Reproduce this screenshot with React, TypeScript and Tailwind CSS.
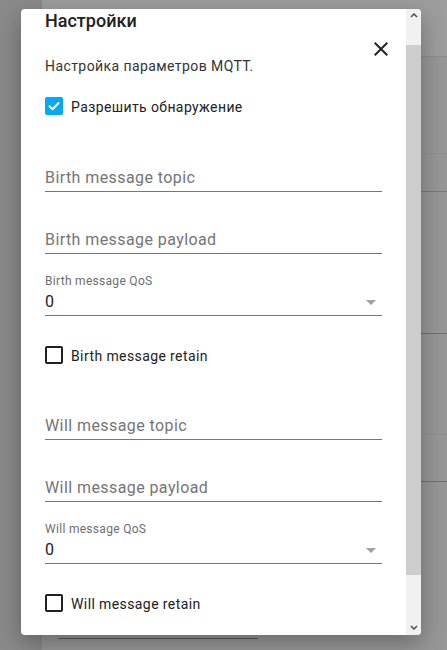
import React from "react";

const font = { fontFamily: "Roboto, 'Noto Sans', sans-serif" };

function CheckRow({ label, checked }: { label: string; checked?: boolean }) {
  return (
    <div className="flex h-[18px] items-center gap-2">
      {checked ? (
        <span className="flex h-[18px] w-[18px] items-center justify-center rounded-[2px] bg-[#03a9f4]">
          <svg width="14" height="14" viewBox="0 0 14 14" fill="none">
            <path d="M2.5 7.2l3 3L11.6 4" stroke="#fff" strokeWidth="2" strokeLinecap="round" strokeLinejoin="round" />
          </svg>
        </span>
      ) : (
        <span className="h-[18px] w-[18px] rounded-[2px] border-2 border-[#212121]" />
      )}
      <span className="pt-px text-[14px] leading-5 tracking-[0.4px] text-[#212121]">{label}</span>
    </div>
  );
}

function TextField({ placeholder }: { placeholder: string }) {
  return (
    <div className="flex h-[62px] flex-col justify-end">
      <div className="border-b border-[#767676] pb-px text-[16px] leading-6 tracking-[0.42px] text-[#757575]">
        {placeholder}
      </div>
    </div>
  );
}

function SelectField({ label, value }: { label: string; value: string }) {
  return (
    <div className="flex h-[62px] flex-col justify-end">
      <div className="text-[12px] leading-[17px] tracking-[0.3px] text-[#6e6e6e]">{label}</div>
      <div className="flex items-center justify-between border-b border-[#767676] pb-px pr-[6px] text-[16px] leading-6 text-[#212121]">
        <span>{value}</span>
        <svg width="10" height="5" viewBox="0 0 10 5">
          <path d="M0 0h10L5 5z" fill="#a0a0a0" />
        </svg>
      </div>
    </div>
  );
}

export default function App() {
  return (
    <div className="relative h-[650px] w-[447px] overflow-hidden bg-[#8d8d8d]" style={font}>
      {/* page behind the overlay */}
      <div className="flex h-full">
        <div className="w-[42px] bg-[#8a8a8a]" />
        <div className="flex flex-1 flex-col bg-[#979797]">
          <div className="h-[57px] border-b border-[#8c8c8c] bg-[#9d9d9d]" />
          <div className="h-[97px] border-b border-[#8f8f8f]" />
          <div className="h-[38px] border-b border-[#777]" />
          <div className="h-[142px] border-b border-[#6f6f6f]" />
          <div className="h-[101px] border-b border-[#8f8f8f]" />
          <div className="h-[47px] border-b border-[#707070]" />
          <div className="flex flex-1 items-end pb-[11px] pl-[16px]">
            <div className="h-px w-[200px] bg-[#5a5a5a]" />
          </div>
        </div>
      </div>

      {/* dialog */}
      <div className="absolute left-[21px] top-[9px] flex h-[626px] w-[400px] overflow-hidden rounded bg-white shadow-[0_8px_24px_rgba(0,0,0,0.3)]">
        <div className="relative flex-1 px-6">
          <div className="text-[18px] font-medium leading-6 text-[#212121]">Настройки</div>
          <button className="absolute left-[348px] top-[28px] flex h-6 w-6 items-center justify-center">
            <svg width="24" height="24" viewBox="0 0 24 24">
              <path
                d="M19 6.41L17.59 5 12 10.59 6.41 5 5 6.41 10.59 12 5 17.59 6.41 19 12 13.41 17.59 19 19 17.59 13.41 12z"
                fill="#212121"
              />
            </svg>
          </button>
          <p className="mt-[23px] text-[14px] leading-5 tracking-[0.42px] text-[#333]">Настройка параметров MQTT.</p>
          <div className="mt-[21px]">
            <CheckRow label="Разрешить обнаружение" checked />
          </div>
          <div className="mt-[15px]">
            <TextField placeholder="Birth message topic" />
            <TextField placeholder="Birth message payload" />
            <SelectField label="Birth message QoS" value="0" />
          </div>
          <div className="mt-[30px]">
            <CheckRow label="Birth message retain" />
          </div>
          <div className="mt-[14px]">
            <TextField placeholder="Will message topic" />
            <TextField placeholder="Will message payload" />
            <SelectField label="Will message QoS" value="0" />
          </div>
          <div className="mt-[30px]">
            <CheckRow label="Will message retain" />
          </div>
        </div>

        {/* scrollbar */}
        <div className="flex w-[15px] flex-col bg-[#f1f1f1]">
          <div className="flex h-[36px] justify-center pt-[4px]">
            <svg width="8" height="5" viewBox="0 0 8 5">
              <path d="M1 4l3-3 3 3" stroke="#505050" strokeWidth="1.5" fill="none" />
            </svg>
          </div>
          <div className="h-[530px] bg-[#cdcdcd]" />
          <div className="flex flex-1 items-end justify-center pb-[5px]">
            <svg width="8" height="5" viewBox="0 0 8 5">
              <path d="M1 1l3 3 3-3" stroke="#505050" strokeWidth="1.5" fill="none" />
            </svg>
          </div>
        </div>
      </div>
    </div>
  );
}
